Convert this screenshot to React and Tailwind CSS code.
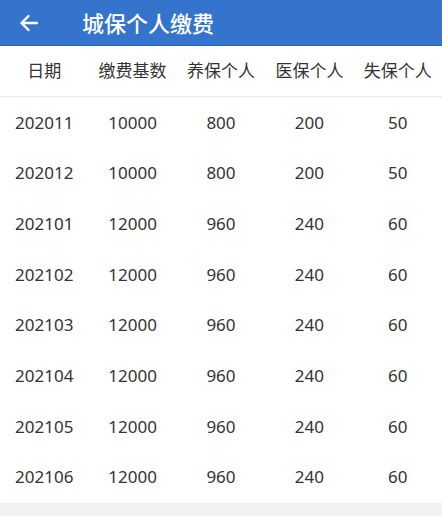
import React from "react";

const rows = [
  ["202011", "10000", "800", "200", "50"],
  ["202012", "10000", "800", "200", "50"],
  ["202101", "12000", "960", "240", "60"],
  ["202102", "12000", "960", "240", "60"],
  ["202103", "12000", "960", "240", "60"],
  ["202104", "12000", "960", "240", "60"],
  ["202105", "12000", "960", "240", "60"],
  ["202106", "12000", "960", "240", "60"],
];
const heads = ["日期", "缴费基数", "养保个人", "医保个人", "失保个人"];

export default function App() {
  return (
    <div
      className="w-[442px] h-[516px] overflow-hidden bg-[#f2f2f2] flex flex-col"
      style={{ fontFamily: '"Noto Sans", "Noto Sans CJK SC", sans-serif' }}
    >
      <div className="h-[46px] bg-[#3474cd] flex items-center border-b border-[#2e66b5] shrink-0">
        <svg width="20" height="18" viewBox="0 0 20 18" className="ml-[19px]">
          <path d="M18 9H2.5M9.5 2L2.5 9l7 7" stroke="#fff" strokeWidth="2.4" fill="none" strokeLinecap="round" strokeLinejoin="round" />
        </svg>
        <span className="ml-[43px] text-white text-[22px] font-medium leading-none">城保个人缴费</span>
      </div>
      <div className="bg-white shrink-0">
        <div className="grid grid-cols-5 h-[51px] items-center border-b border-[#ececec] shadow-[0_1px_2px_rgba(0,0,0,0.04)]">
          {heads.map((h) => (
            <div key={h} className="text-center text-[17px] text-[#333]">{h}</div>
          ))}
        </div>
        {rows.map((r, i) => (
          <div key={i} className="grid grid-cols-5 h-[50.7px] items-center">
            {r.map((c, j) => (
              <div key={j} className="text-center text-[17px] text-[#333]">{c}</div>
            ))}
          </div>
        ))}
      </div>
    </div>
  );
}
